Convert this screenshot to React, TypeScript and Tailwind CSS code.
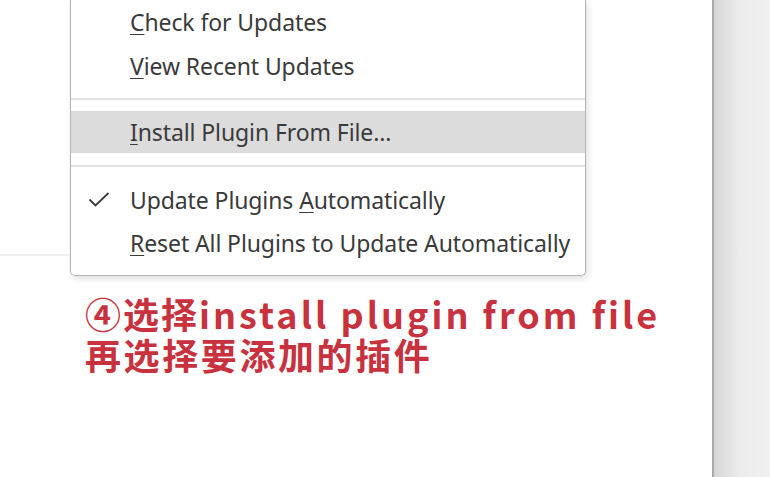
import React from "react";

const menuFont = { fontFamily: '"Noto Sans", "Open Sans", sans-serif' };

function Item({ children, highlight, check, h = "h-[44px]" }: { children: React.ReactNode; highlight?: boolean; check?: boolean; h?: string }) {
  return (
    <div className={`flex items-center ${highlight ? "bg-[#dcdcdc] h-[42px]" : h}`}>
      <div className="w-[59px] flex justify-end pr-[20px]">
        {check && (
          <svg width="22" height="16" viewBox="0 0 22 16" fill="none">
            <path d="M1.5 7.5 L7.5 13.5 L20.5 1" stroke="#3a3a3a" strokeWidth="1.8" />
          </svg>
        )}
      </div>
      <span className="text-[23px] text-[#3a3a3a] leading-none tracking-[-0.1px]">{children}</span>
    </div>
  );
}

function U({ children }: { children: React.ReactNode }) {
  return <span className="underline underline-offset-[3px] decoration-[1px]">{children}</span>;
}

export default function App() {
  return (
    <div className="w-[770px] h-[477px] flex overflow-hidden bg-white" style={menuFont}>
      <div className="w-[712px] h-full relative bg-white">
        <div className="absolute left-0 top-[254px] w-[70px] h-[2px] bg-[#f0f0f0]" />
        <div className="ml-[70px] w-[516px] bg-white border border-t-0 border-[#b4b4b4] rounded-b-[5px] shadow-[2px_3px_6px_rgba(0,0,0,0.12)] pb-[10px]">
          <Item><U>C</U>heck for Updates</Item>
          <Item><U>V</U>iew Recent Updates</Item>
          <div className="h-[10px]" />
          <div className="h-[2px] bg-[#e3e3e3]" />
          <div className="h-[11px]" />
          <Item highlight><U>I</U>nstall Plugin From File...</Item>
          <div className="h-[12px]" />
          <div className="h-[2px] bg-[#e3e3e3]" />
          <div className="h-[11px]" />
          <Item check>Update Plugins <U>A</U>utomatically</Item>
          <Item h="h-[43px]"><U>R</U>eset All Plugins to Update Automatically</Item>
        </div>
        <div
          className="ml-[85px] mt-[17px] text-[#c8323f] font-bold text-[36px] leading-[41px]"
          style={{ fontFamily: '"Noto Sans CJK SC", "Noto Sans", sans-serif' }}
        >
          <div className="tracking-[2px] whitespace-nowrap">
            ④选择<span className="tracking-[3px]">install plugin from file</span>
          </div>
          <div className="tracking-[2.6px]">再选择要添加的插件</div>
        </div>
      </div>
      <div className="flex-1 h-full border-l-2 border-[#a9a9a9] bg-[linear-gradient(to_right,#d6d6d6,#ececec_25px,#f0f0f0)]" />
    </div>
  );
}
